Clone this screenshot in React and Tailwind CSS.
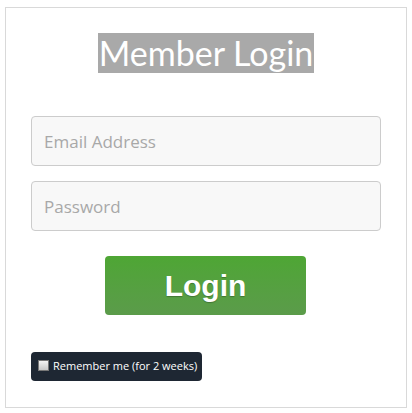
import React from "react";

export default function App() {
  return (
    <div className="w-[412px] h-[413px] bg-white pt-[7px] pl-[5px]">
      <div className="w-[402px] h-[401px] border border-[#d9d9d9] bg-white flex flex-col">
        <div className="pt-[25px] flex justify-center">
          <span
            className="bg-[#a9a9a9] text-white text-[34px] leading-[40px] px-px"
            style={{ fontFamily: "Lato, sans-serif" }}
          >
            Member Login
          </span>
        </div>
        <div className="mt-[43px] pl-[25px] flex flex-col gap-[15px]">
          <input
            placeholder="Email Address"
            className="w-[350px] h-[50px] rounded-[4px] border border-[#cccccc] bg-[#f8f8f8] pl-[12px] text-[17px] placeholder:text-[#a8a8a8] outline-none"
            style={{ fontFamily: "'Open Sans', sans-serif" }}
          />
          <input
            placeholder="Password"
            className="w-[350px] h-[50px] rounded-[4px] border border-[#cccccc] bg-[#f8f8f8] pl-[12px] text-[17px] placeholder:text-[#a8a8a8] outline-none"
            style={{ fontFamily: "'Open Sans', sans-serif" }}
          />
        </div>
        <div className="mt-[25px] pl-[99px]">
          <button
            className="w-[201px] h-[59px] rounded-[4px] bg-gradient-to-b from-[#4ea634] to-[#5b9b4a] text-white text-[30px] font-bold flex items-center justify-center"
            style={{ fontFamily: "'Liberation Sans', Arial, sans-serif", textShadow: "0 1px 1px rgba(0,0,0,0.25)" }}
          >
            Login
          </button>
        </div>
        <div className="mt-[37px] pl-[25px]">
          <label
            className="inline-flex items-center w-[171px] h-[29px] rounded-[4px] bg-[#1e2733] pl-[7px] text-white text-[11px] whitespace-nowrap"
            style={{ fontFamily: "'Open Sans', sans-serif" }}
          >
            <span className="w-[11px] h-[11px] shrink-0 border border-[#777] bg-gradient-to-b from-[#f4f4f4] to-[#c8c8c8] mr-[4px] mb-[3px]" />
            <span>Remember me (for 2 weeks)</span>
          </label>
        </div>
      </div>
    </div>
  );
}
